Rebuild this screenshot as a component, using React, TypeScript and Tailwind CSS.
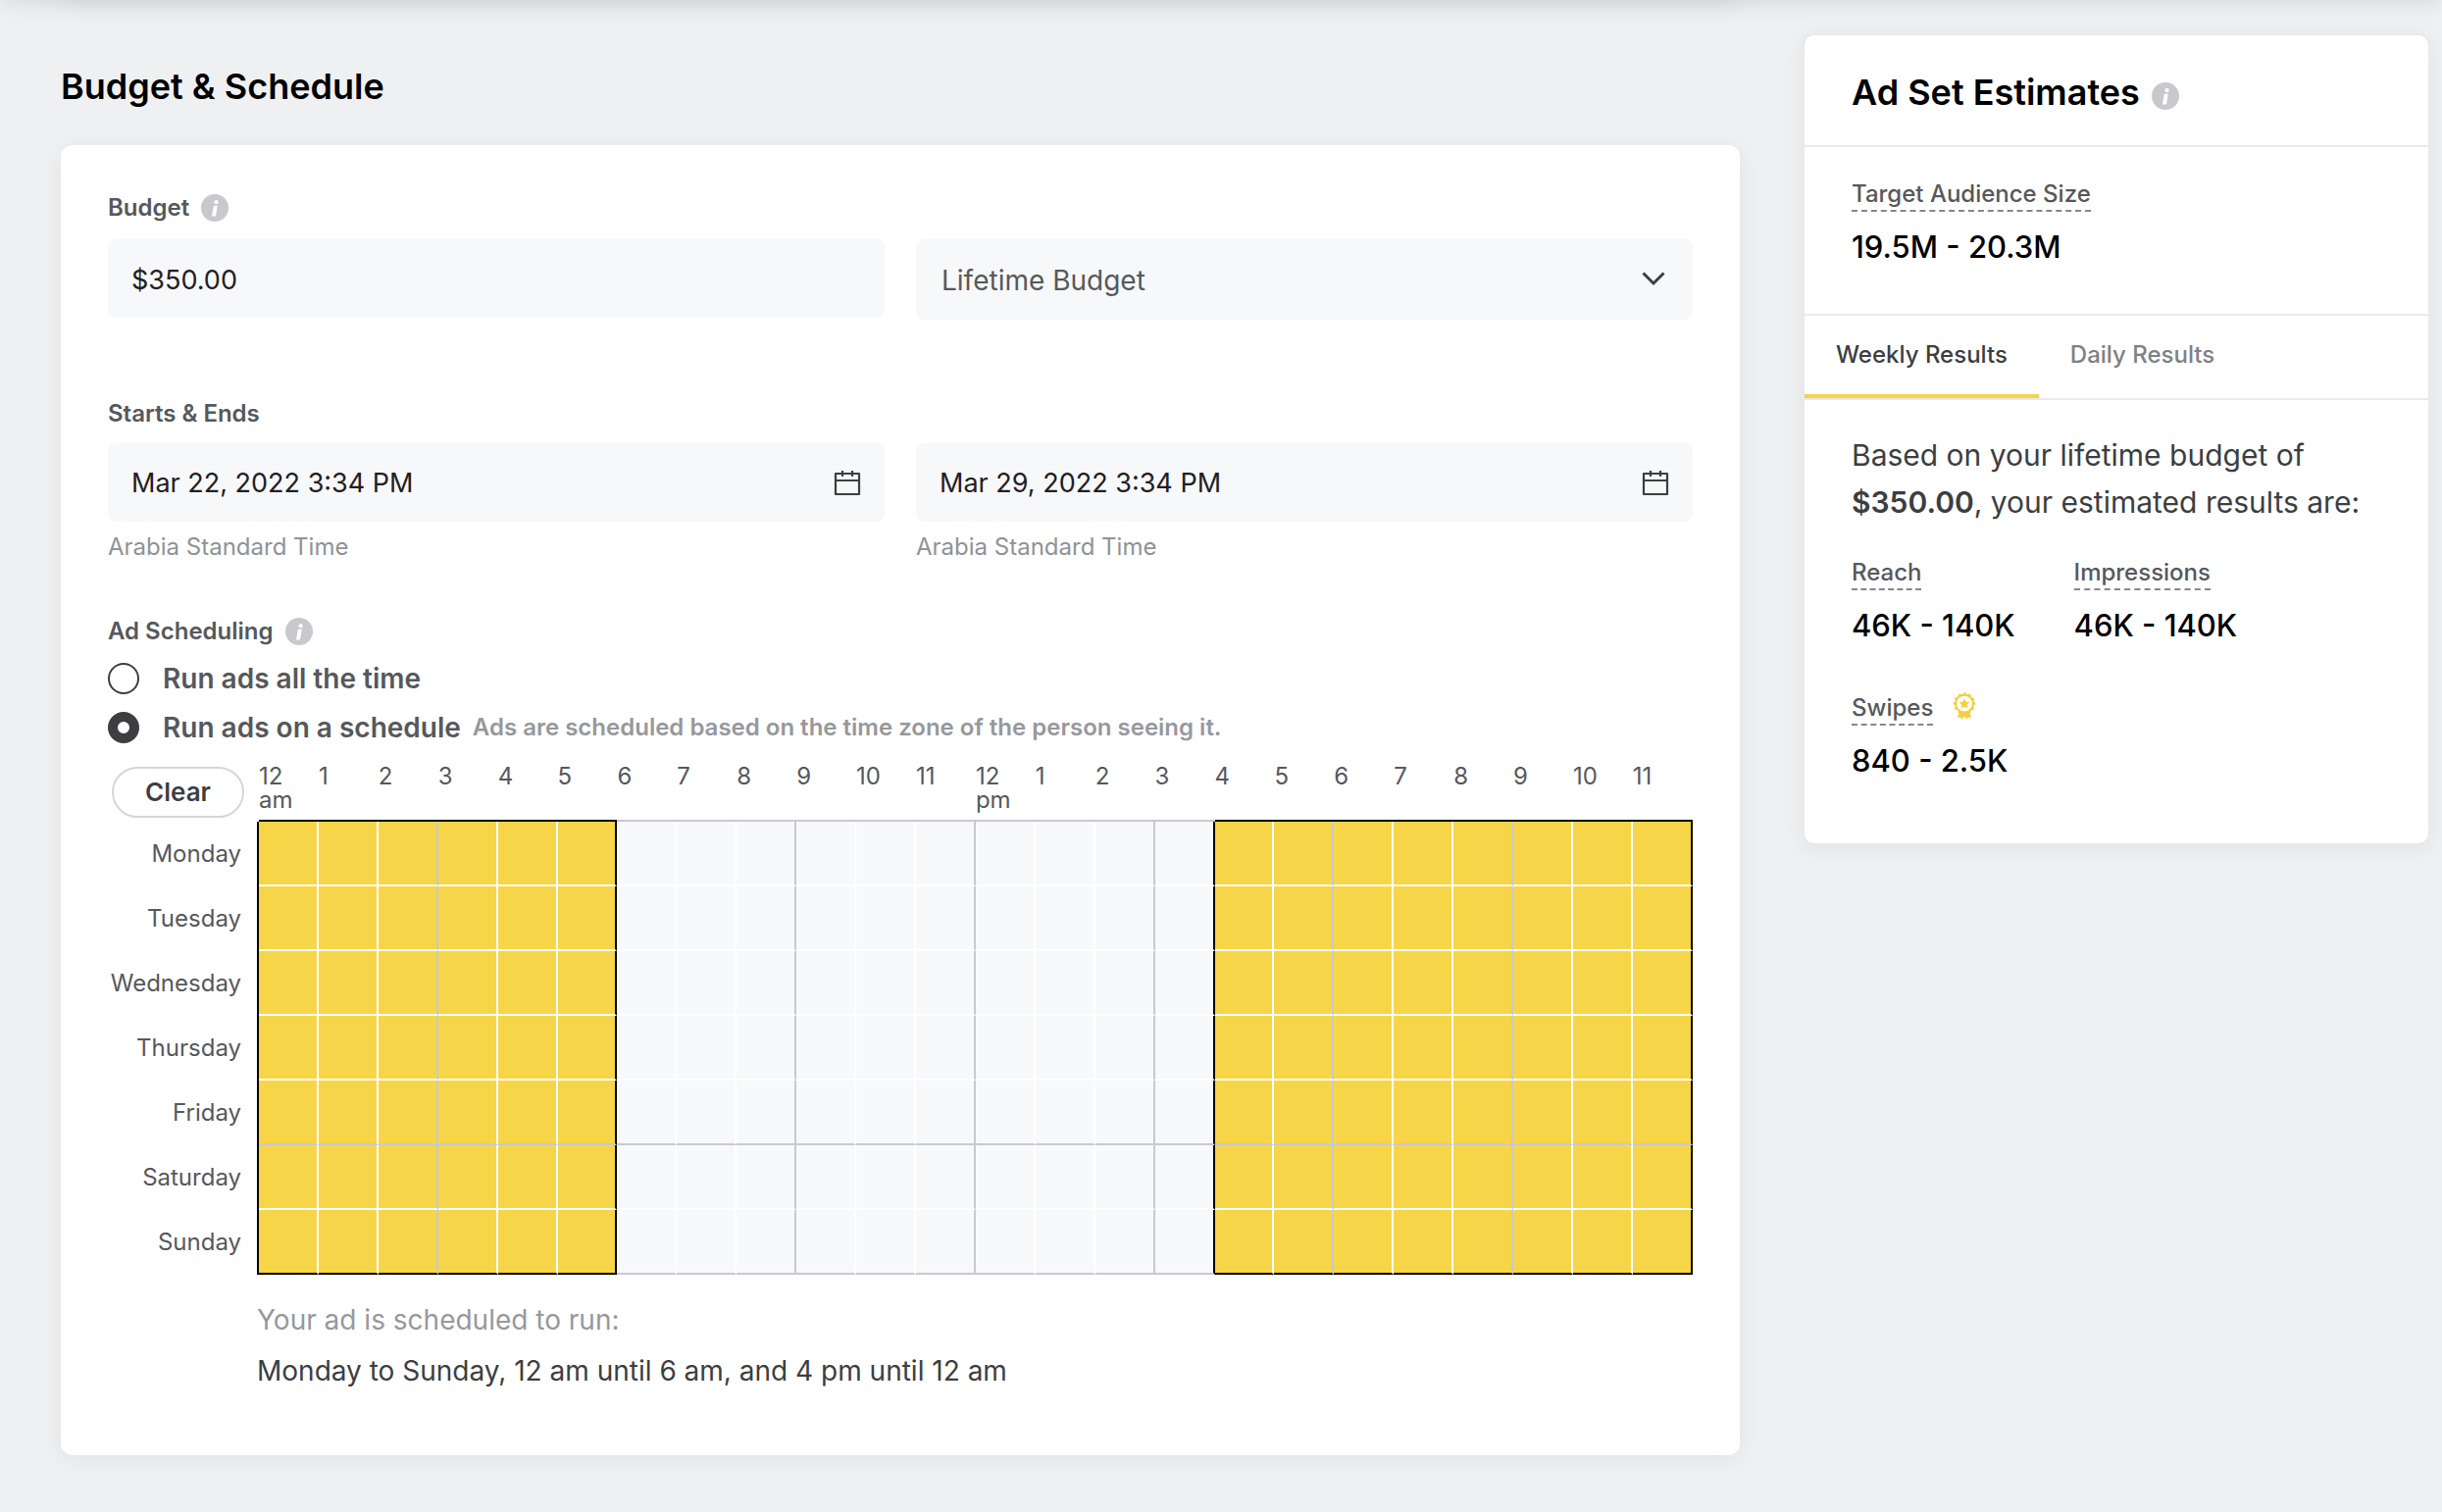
import { useState } from 'react';

const DAYS = ['Monday', 'Tuesday', 'Wednesday', 'Thursday', 'Friday', 'Saturday', 'Sunday'];
const HOURS = Array.from({ length: 24 }, (_, i) => i);

const isDefaultHour = (hour: number) => hour < 6 || hour >= 16;
const defaultSchedule = () => DAYS.map(() => HOURS.map(isDefaultHour));

function InfoIcon() {
  return (
    <svg viewBox="0 0 28 28" className="w-7 h-7 shrink-0" aria-hidden="true">
      <circle cx="14" cy="14" r="14" fill="#c9c9cd" />
      <circle cx="15.6" cy="8.2" r="2.1" fill="#fff" />
      <path d="M12.8 11.8h4l-1.8 10.800h-4z" fill="#fff" />
    </svg>
  );
}

function CalendarIcon() {
  return (
    <svg viewBox="0 0 28 28" className="w-7 h-7 shrink-0" fill="none" stroke="#3c3e41" strokeWidth="2.2" strokeLinejoin="round" aria-hidden="true">
      <path d="M2 5h24v21H2zM2 12h24M9 2v6M19 2v6" />
    </svg>
  );
}

function ChevronIcon() {
  return (
    <svg viewBox="0 0 24 16" className="w-6 h-4" fill="none" stroke="#3c3e41" strokeWidth="3" aria-hidden="true">
      <path d="M1.5 2.5L12 13L22.5 2.5" />
    </svg>
  );
}

function AwardIcon() {
  return (
    <svg viewBox="0 0 24 28" className="w-6 h-7" aria-hidden="true">
      <path d="M7 19.500L5 26l3-.500 1.500 2L12 24.500l2.500 3 1.500-2 3 .500-2-6.500z" fill="#f3cf3f" />
      <circle cx="12" cy="11.6" r="9" fill="#fff" stroke="#f3cf3f" strokeWidth="2.2" />
      <circle cx="12" cy="11.6" r="10" fill="none" stroke="#f3cf3f" strokeWidth="2.6" strokeLinecap="round" strokeDasharray="0 5.236" />
      <path d="M12 6.200l1.600 3.500 3.800.400-2.800 2.600.800 3.800-3.400-1.900-3.400 1.900.800-3.800-2.800-2.600 3.800-.400z" fill="#f3cf3f" />
    </svg>
  );
}

interface DateFieldProps {
  id: string;
  label: string;
  value: string;
}

function DateField({ id, label, value }: DateFieldProps) {
  return (
    <div>
      <div className="flex items-center h-20 px-6 rounded-lg bg-[#f7f8fa]">
        <input id={id} type="text" aria-label={label} defaultValue={value} className="flex-1 min-w-0 pt-[2px] bg-transparent text-[27px] text-[#1f2023] outline-none" />
        <button type="button" aria-label={`Pick ${label}`}>
          <CalendarIcon />
        </button>
      </div>
      <p className="mt-2 text-2xl leading-9 text-[#8f9297]">Arabia Standard Time</p>
    </div>
  );
}

interface MetricProps {
  label: string;
  value: string;
  award?: boolean;
}

function Metric({ label, value, award }: MetricProps) {
  return (
    <div>
      <div className="flex items-start gap-5">
        <span className="border-b-2 border-dashed border-[#85878b] text-2xl leading-8 font-medium text-[#56585c]">{label}</span>
        {award && <AwardIcon />}
      </div>
      <p className="mt-4 text-[31px] leading-10 font-medium text-black">{value}</p>
    </div>
  );
}

function ScheduleTable() {
  const [schedule, setSchedule] = useState(defaultSchedule);

  const toggle = (day: number, hour: number) => {
    setSchedule(prev => prev.map((row, d) => (d === day ? row.map((on, h) => (h === hour ? !on : on)) : row)));
  };

  // Each cell owns its right and bottom line, black where the selection ends
  const rightLine = (day: number, hour: number) => {
    const row = schedule[day];
    if (row[hour] !== (row[hour + 1] ?? false)) return 'border-r-black';
    return hour % 3 === 2 ? 'border-r-[#c8c9d1]' : 'border-r-white';
  };
  const bottomLine = (day: number, hour: number) => {
    const next = schedule[day + 1]?.[hour] ?? false;
    if (schedule[day][hour] !== next) return 'border-b-black';
    return day === 4 || day === 6 ? 'border-b-[#c8c9d1]' : 'border-b-white';
  };

  return (
    <table className="w-full table-fixed border-separate border-spacing-0 text-2xl text-[#56585c]">
      <colgroup>
        <col className="w-[154px]" />
      </colgroup>
      <thead>
        <tr>
          <td className="pl-1 pt-[6px] align-top">
            <button type="button" onClick={() => setSchedule(DAYS.map(() => HOURS.map(() => false)))} className="block w-[135px] h-[52px] rounded-full border-2 border-[#d5d6d9] text-[26px] leading-none font-semibold text-[#3c3e41]">
              Clear
            </button>
          </td>
          {HOURS.map(hour => (
            <th key={hour} scope="col" className={`h-[62px] pt-1 px-0 border-b-2 text-left align-top font-normal leading-6 ${schedule[0][hour] ? 'border-b-black' : 'border-b-[#c8c9d1]'}`}>
              {hour % 12 || 12}
              {hour === 0 && <span className="block">am</span>}
              {hour === 12 && <span className="block">pm</span>}
            </th>
          ))}
        </tr>
      </thead>
      <tbody>
        {DAYS.map((day, d) => (
          <tr key={day}>
            <th scope="row" className={`pr-4 border-r-2 text-right font-normal ${schedule[d][0] ? 'border-r-black' : 'border-r-[#c8c9d1]'}`}>{day}</th>
            {HOURS.map(hour => (
              <td key={hour} className={`p-0 border-r-2 border-b-2 ${rightLine(d, hour)} ${bottomLine(d, hour)}`}>
                <button type="button" aria-label={`${day} ${hour}:00`} aria-pressed={schedule[d][hour]} onClick={() => toggle(d, hour)} className={`block w-full h-16 ${schedule[d][hour] ? 'bg-[#f7d548]' : 'bg-[#f8f9fb]'}`} />
              </td>
            ))}
          </tr>
        ))}
      </tbody>
    </table>
  );
}

export default function App() {
  const [mode, setMode] = useState('schedule');
  const [tab, setTab] = useState('weekly');

  const tabClass = (name: string) =>
    tab === name ? 'border-b-[#f1d54a] text-[#3c3e41]' : 'border-b-transparent text-[#7e8085]';
  const radioClass =
    'appearance-none w-8 h-8 shrink-0 rounded-full border-2 border-[#3c3e41] bg-white checked:border-[10px]';

  return (
    <div className="min-h-screen overflow-hidden bg-[#eff0f2] font-['Inter','Liberation_Sans',sans-serif]">
      {/* Shadows of the bar and card above */}
      <div className="h-8 -mt-8 shadow-[0_0_24px_rgba(0,0,0,0.12)]" />

      <div className="flex items-start gap-16 pl-[62px] pr-3">
        <main className="flex-1 min-w-0">
          <div className="h-8 -mt-8 shadow-[0_0_32px_rgba(0,0,0,0.08)]" />
          <h2 className="pt-16 mb-9 text-4xl leading-12 font-semibold text-black">Budget &amp; Schedule</h2>

          <section className="px-12 pt-12 pb-15 rounded-xl bg-white shadow-[0_4px_24px_rgba(0,0,0,0.06)]">
            <div className="flex items-center gap-3 h-8 mb-4">
              <label htmlFor="budget" className="text-2xl font-semibold text-[#56585c]">Budget</label>
              <InfoIcon />
            </div>
            <div className="grid grid-cols-2 items-start gap-8">
              <input id="budget" type="text" defaultValue="$350.00" className="w-full h-20 px-6 pt-[2px] rounded-lg bg-[#f7f8fa] text-[27px] text-[#1f2023] outline-none" />
              <div className="relative">
                <select aria-label="Budget type" className="appearance-none w-full h-[82px] pl-[26px] pr-6 pt-[2px] rounded-lg bg-[#f7f8fa] text-[28px] text-[#56585c] outline-none">
                  <option>Lifetime Budget</option>
                  <option>Daily Budget</option>
                </select>
                <span className="absolute right-7 top-8 pointer-events-none">
                  <ChevronIcon />
                </span>
              </div>
            </div>

            <h3 className="mt-20 mb-[14px] text-2xl font-semibold text-[#56585c]">Starts &amp; Ends</h3>
            <div className="grid grid-cols-2 gap-8">
              <DateField id="starts" label="start date" value="Mar 22, 2022 3:34 PM" />
              <DateField id="ends" label="end date" value="Mar 29, 2022 3:34 PM" />
            </div>

            <div className="flex items-center gap-3 h-8 mt-[52px] text-2xl font-semibold text-[#56585c]">
              Ad Scheduling
              <InfoIcon />
            </div>
            <div className="mt-2 flex flex-col text-[28px] font-semibold text-[#56585c]">
              <div className="flex items-center h-12">
                <input id="mode-all" type="radio" name="mode" checked={mode === 'all'} onChange={() => setMode('all')} className={radioClass} />
                <label htmlFor="mode-all" className="ml-6">Run ads all the time</label>
              </div>
              <div className="flex items-center h-13">
                <input id="mode-schedule" type="radio" name="mode" checked={mode === 'schedule'} onChange={() => setMode('schedule')} className={radioClass} />
                <label htmlFor="mode-schedule" className="ml-6">Run ads on a schedule</label>
                <span className="ml-3 text-2xl text-[#96989d]">Ads are scheduled based on the time zone of the person seeing it.</span>
              </div>
            </div>

            <div className="mt-2">
              <ScheduleTable />
            </div>

            <div className="pl-[152px] pt-5 text-[28px] leading-[52px]">
              <p className="text-[#96989d]">Your ad is scheduled to run:</p>
              <p className="text-[#3c3e41]">Monday to Sunday, 12 am until 6 am, and 4 pm until 12 am</p>
            </div>
          </section>
        </main>

        <aside className="w-160 mt-[34px] rounded-xl border-2 border-[#e8e9eb] bg-white shadow-[0_4px_24px_rgba(0,0,0,0.06)]">
          <div className="flex items-end gap-3 h-28 px-12 pb-9">
            <h2 className="text-4xl leading-9 font-semibold text-black">Ad Set Estimates</h2>
            <InfoIcon />
          </div>
          <div className="px-12 pt-8 pb-12 border-y-2 border-[#e8e9eb]">
            <Metric label="Target Audience Size" value="19.5M - 20.3M" />
          </div>
          <div role="tablist" className="flex border-b-2 border-[#e8e9eb] text-2xl font-medium">
            <button type="button" role="tab" aria-selected={tab === 'weekly'} onClick={() => setTab('weekly')} className={`h-[84px] px-8 border-b-4 ${tabClass('weekly')}`}>
              Weekly Results
            </button>
            <button type="button" role="tab" aria-selected={tab === 'daily'} onClick={() => setTab('daily')} className={`h-[84px] px-8 border-b-4 ${tabClass('daily')}`}>
              Daily Results
            </button>
          </div>
          <div className="px-12 pt-8 pb-16">
            <p className="text-[30px] leading-12 text-[#3c3e41]">
              Based on your lifetime budget of <strong className="font-semibold">$350.00</strong>, your estimated results are:
            </p>
            <div className="mt-8 flex gap-15">
              <Metric label="Reach" value="46K - 140K" />
              <Metric label="Impressions" value="46K - 140K" />
            </div>
            <div className="mt-12">
              <Metric label="Swipes" value="840 - 2.5K" award />
            </div>
          </div>
        </aside>
      </div>
    </div>
  );
}
